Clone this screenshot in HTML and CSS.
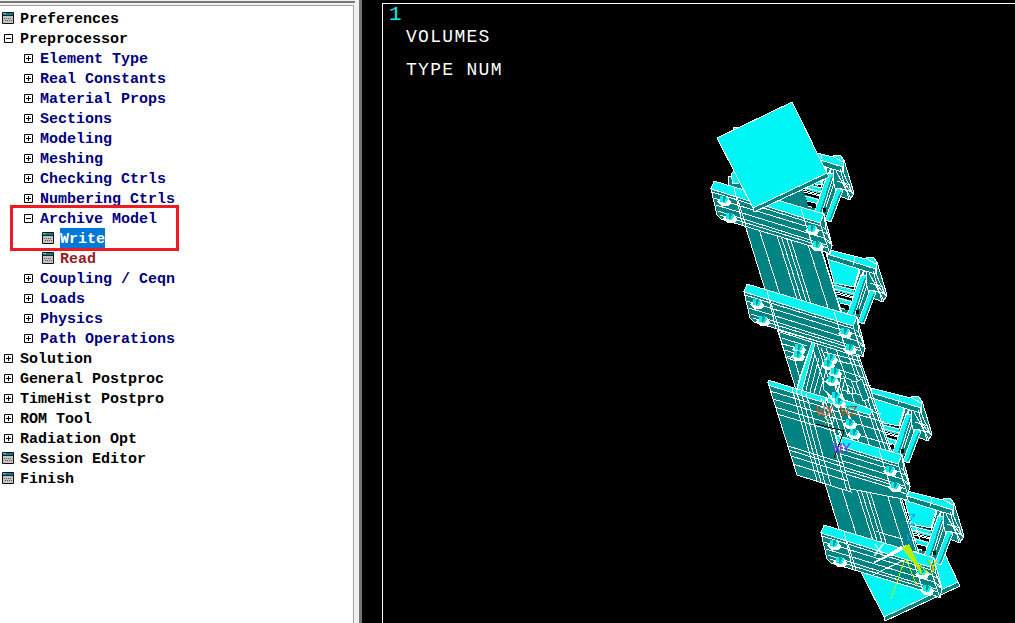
FILE: index.html
```html
<!DOCTYPE html>
<html lang="en"><head><meta charset="utf-8"><title>Main Menu</title><link rel="stylesheet" href="styles.css"></head>
<body>
<svg class="defs" aria-hidden="true"><defs>
<symbol id="plus" viewBox="0 0 9 9"><path d="M.5.5h8v8h-8zM2 4.5h5M4.5 2v5" fill="none" stroke="currentColor"/></symbol>
<symbol id="minus" viewBox="0 0 9 9"><path d="M.5.5h8v8h-8zM2 4.5h5" fill="none" stroke="currentColor"/></symbol>
<symbol id="form" viewBox="0 0 12 12"><path fill="#c4c4c4" stroke="#111" d="M.5.5h11v11H.5z"/><path fill="#087f87" d="M1 1h10v2H1z"/><path fill="#3dd" d="M1 1h3v1H1z"/><path stroke="#222" d="M1 3.5h10"/><path stroke="#555" stroke-dasharray="1 1" d="M2 6.5h8M3 8.5h7"/></symbol>
</defs></svg>
<main class="app">
<nav class="side"><div class="toolbar-edge"></div><div class="frame"><ul class="tree">
<li class="row"><svg class="form"><use href="#form"/></svg><span>Preferences</span></li>
<li class="row"><svg class="box"><use href="#minus"/></svg><span>Preprocessor</span></li>
<li class="row sub"><svg class="box"><use href="#plus"/></svg><span>Element Type</span></li>
<li class="row sub"><svg class="box"><use href="#plus"/></svg><span>Real Constants</span></li>
<li class="row sub"><svg class="box"><use href="#plus"/></svg><span>Material Props</span></li>
<li class="row sub"><svg class="box"><use href="#plus"/></svg><span>Sections</span></li>
<li class="row sub"><svg class="box"><use href="#plus"/></svg><span>Modeling</span></li>
<li class="row sub"><svg class="box"><use href="#plus"/></svg><span>Meshing</span></li>
<li class="row sub"><svg class="box"><use href="#plus"/></svg><span>Checking Ctrls</span></li>
<li class="row sub"><svg class="box"><use href="#plus"/></svg><span>Numbering Ctrls</span></li>
<li class="row sub"><svg class="box"><use href="#minus"/></svg><span>Archive Model</span></li>
<li class="row leaf"><svg class="form"><use href="#form"/></svg><span class="selected">Write</span></li>
<li class="row leaf"><svg class="form"><use href="#form"/></svg><span>Read</span></li>
<li class="row sub"><svg class="box"><use href="#plus"/></svg><span>Coupling / Ceqn</span></li>
<li class="row sub"><svg class="box"><use href="#plus"/></svg><span>Loads</span></li>
<li class="row sub"><svg class="box"><use href="#plus"/></svg><span>Physics</span></li>
<li class="row sub"><svg class="box"><use href="#plus"/></svg><span>Path Operations</span></li>
<li class="row"><svg class="box"><use href="#plus"/></svg><span>Solution</span></li>
<li class="row"><svg class="box"><use href="#plus"/></svg><span>General Postproc</span></li>
<li class="row"><svg class="box"><use href="#plus"/></svg><span>TimeHist Postpro</span></li>
<li class="row"><svg class="box"><use href="#plus"/></svg><span>ROM Tool</span></li>
<li class="row"><svg class="box"><use href="#plus"/></svg><span>Radiation Opt</span></li>
<li class="row"><svg class="form"><use href="#form"/></svg><span>Session Editor</span></li>
<li class="row"><svg class="form"><use href="#form"/></svg><span>Finish</span></li>
</ul></div><div class="highlight"></div></nav>
<section class="view"><div class="plot">
<div class="window-no">1</div><div class="caption">VOLUMES</div><div class="caption">TYPE NUM</div>
<svg class="model" viewBox="383 4 632 619" shape-rendering="crispEdges">
<defs>
<g id="bolt"><path class="w" d="M-6 1l4-5 7 0 3 5-2 4-8 0z"/><path class="c0" d="M-3-5h5l3 3-2 4-6-1z"/><path class="d0" d="M0-5h2l1 2-2 4h-1z"/></g>
<g id="beam">
<path class="d" d="M744 292L853 326 857 317 865 348 863 357 847 350 754 322 750 318z"/>
<path class="c" d="M747 284L857 317 853 326 744 292z"/>
<path class="l" d="M745 295L854 329M747 301L855 334M749 308L857 341M751 314L859 348M753 318L861 351M767 291L776 329M770 300L779 329M834 312L846 350M853 326L863 357M857 317L859 333 856 330M859 333L865 348 860 344M855 335L863 338M857 342L865 345"/>
<use href="#bolt" x="756" y="304"/><use href="#bolt" x="762" y="321"/><use href="#bolt" x="844" y="333"/><use href="#bolt" x="849" y="349"/>
</g>
<g id="bracket">
<path fill="#008383" d="M832 282L854 289 861 269 873 272 872 292 858 319 842 314z"/>
<path class="c" d="M827 256L860 266 854 287 834 283z"/>
<path d="M834 284l20 6-2 19-11-1z"/>
<path class="c0" d="M834 284l20 6 1 6-19-5zM838 297l15 4v5l-13-3z"/>
<path class="l" d="M834 285l20 5 7-23M835 289l20 5 9-25M836 292l18 5M837 294l16 4M838 298l15 4M840 303l12 3M841 308l10 3M857 294l8-25M842 312l9 3M868 282l-9 27"/>
<path class="d" d="M866 271L877 262 887 295 883 302 870 297 867 286z"/>
<path class="c" d="M826 249L866 259 867 257 874 258 877 262 876 272 827 257z"/>
<path class="d" d="M827 254L876 269 875 274 827 259z"/>
<path class="l" d="M855 257l-2 8M867 259l9 5M869 273l15 28M873 271l9 30M870 283l13 4M872 290l13 4M875 282l10 13M876 262l0 12 10 22"/>
<path class="c" d="M861 275l6 1-13 42-7-3zM870 290l6 2-12 32-6-2z"/>
<path class="s" d="M865 279l-12 37M874 294l-11 28"/>
<path d="M845 307h4v3h-4zM856 310h3v4h-3z"/>
</g>
</defs>
<!-- rear brackets -->
<path class="d" d="M728 177l18-3 6 27-23-9z"/><path class="c" d="M731 174l8-7 6 15-12 2zM734 127h6v10h-8z"/>
<path class="d" d="M776 200L818 184 812 210 778 203z"/>
<use href="#bracket" x="-33" y="-102"/><use href="#bracket"/><use href="#bracket" x="45" y="139"/>
<!-- foot plate -->
<path class="c" d="M861 572L884 617 958 582 944 552z"/><path class="d" d="M884 617L958 582 960 586 885 621z"/>
<use href="#bracket" x="77" y="241"/>
<!-- column -->
<path class="d" d="M745 225L821 248 919 553 840 532z"/>
<path class="l" d="M758 226L858 540M775 229L875 547M779 229L879 547M784 230L884 548M788 231L888 549M805 235L905 551M818 240L916 550"/>
<!-- central carriage -->
<path class="d" d="M778 330L858 353 908 500 846 488 802 393 799 375 795 361 786 357z"/>
<path class="l" d="M780 332L859 357M782 338L807 346M783 344L804 350M785 350L802 356M787 356L800 360M812 342L799 380 797 389M815 342L801 387M811 343L852 468M817 344L860 474M821 348L850 420M826 348L870 474M836 349L878 470M847 351L893 482M851 353L899 487M856 354L900 480M824 352L860 361M826 358L863 367M831 367L867 379M837 377L871 386M842 390L875 399M840 403L881 414M842 410L884 422M847 421L888 433M851 433L892 445M802 387L812 348M806 390L815 354M810 392L819 358M814 393L823 362M819 394L827 368"/>
<path class="c" d="M812 342l3 1-13 48-5-2zM829 395l34 11 10 4-3 5-43-13z"/>
<path class="d" d="M824 381l10 1 3 12-5 3-9-8zM844 377l7 3 5 13-6 1zM856 382l6-3 7 20-6 2z"/>
<path class="l" d="M841 378L835 403M845 377L839 406M847 385l5 3 0 6-5-1z"/>
<use href="#bolt" x="798" y="349"/><use href="#bolt" x="797" y="356"/><use href="#bolt" x="830" y="359"/><use href="#bolt" x="827" y="365"/><use href="#bolt" x="834" y="373"/><use href="#bolt" x="831" y="381"/><use href="#bolt" x="835" y="397"/><use href="#bolt" x="838" y="403"/><use href="#bolt" x="849" y="424"/><use href="#bolt" x="853" y="434"/><use href="#bolt" x="847" y="442"/>
<!-- clamp beams -->
<use href="#beam" x="45" y="138"/><use href="#beam"/><use href="#beam" x="-33" y="-103"/><use href="#beam" x="77" y="241"/>
<!-- side plate -->
<path class="d" d="M768 383L825 400 851 492 797 475z"/><path class="c" d="M768 380L827 398 825 403 768 385z"/>
<path class="l" d="M770 391L827 408M773 399L830 416M775 407L832 424M777 414L834 431M788 446L843 463M789 450L844 467M791 456L846 473M793 464L848 481M792 388L817 481M796 389L821 482M801 391L825 484M806 393L831 486M821 398L847 491M825 399L851 492M832 422L840 450M838 429L844 451"/>
<path class="l" d="M823 400l3 19M826 403l5 17M830 406l4 16M821 407l18 5M831 417l14 4"/>
<!-- cap plate -->
<path class="d" d="M753 208L827 173 829 177 754 212z"/><path class="c" d="M717 138L792 102 827 173 753 208z"/>
<!-- working plane triad -->
<path d="M816 424L844 431 834 458" fill="none" stroke="#000"/>
<g class="triad" shape-rendering="auto"><text x="816" y="416" fill="#bd5c35">WX</text><text x="840" y="416" fill="#8b5c28">WZ</text><text x="833" y="453" fill="#8738e8">WY</text></g>
<path d="M824 417l5 3-4 4" fill="none" stroke="#bdcb35"/>
<!-- global triad -->
<path class="l" d="M871 576L906 559M876 531L888 535 903 539M902 546L874 563M914 522l6 17M918 531l8 3M914 552l8-3"/>
<path d="M873 562l33-17 2 3-31 14z" fill="#fff"/>
<path d="M902 548l7-4 17 36z" fill="#b5ef00"/>
<path d="M905 559L891 599M906 559L917 586M912 559L930 574 937 567" fill="none" stroke="#b5ef00"/>
<path d="M907 534l5 12M908 514h7l-7 10h7M907 541l3-7" fill="none" stroke="#129cff"/>
<g class="axis" shape-rendering="auto"><text x="873" y="556" fill="#d8ffff">X</text><text x="927" y="572" fill="#b5dc00">Y</text></g>
<path class="w" d="M914 574l9 1 3 3-7 0z"/>
</svg></div></section></main></body></html>
```
FILE: styles.css
```css
* { box-sizing: border-box; }
body { margin: 0; background: #000; overflow: hidden; }
.defs { position: absolute; width: 0; height: 0; }
.app { display: flex; width: 1015px; height: 623px; }
.side { position: relative; width: 362px; background: #f0f0f0; border-right: 3px solid #777; }
.toolbar-edge { width: 355px; height: 5px; padding-top: 1px; }
.toolbar-edge::after { content: ""; display: block; height: 2px; background: #777; }
.frame { width: 354px; height: 618px; border-top: 1px solid #a0a0a0; border-right: 1px solid #a0a0a0; background: #fff; }
.tree { margin: 0; padding: 2px 0 0 2px; list-style: none; font: bold 15px/24px "Liberation Mono", monospace; color: #000; }
.row { display: flex; align-items: center; height: 20px; white-space: pre; }
.row span { display: block; height: 20px; }
.box { width: 9px; height: 9px; margin: 0 7px 0 2px; color: #000; }
.form { width: 12px; height: 12px; margin-right: 6px; }
.sub { padding-left: 20px; color: #000080; }
.leaf { padding-left: 40px; color: #981b1e; }
.row .selected { background: #0078d7; color: #fff; }
.highlight { position: absolute; left: 10px; top: 205px; width: 169px; height: 46px; border: 3px solid #ed1c24; }
.view { flex: 1; padding: 3px 0 0 20px; background: #000; }
.plot { position: relative; height: 620px; border: 1px solid #fff; border-width: 1px 0 0 1px; color: #fff; font: 18px/34px "Liberation Mono", monospace; }
.window-no { height: 16px; padding-left: 6px; font-size: 21px; line-height: 21px; color: #00f0f0; }
.caption { padding-left: 23px; height: 33px; letter-spacing: 1.3px; }
.model { position: absolute; inset: 0; width: 632px; height: 619px; }
.c { fill: #00f5f5; stroke: #fff; }
.d { fill: #008383; stroke: #fff; }
.c0 { fill: #00f0f0; }
.d0 { fill: #009999; }
.w { fill: #fff; }
.l { fill: none; stroke: #fff; }
.s { fill: none; stroke: #00999b; stroke-width: 1.5px; }
.triad { font: 15px "Liberation Mono", monospace; }
.axis { font: 19px "Liberation Mono", monospace; }
```
